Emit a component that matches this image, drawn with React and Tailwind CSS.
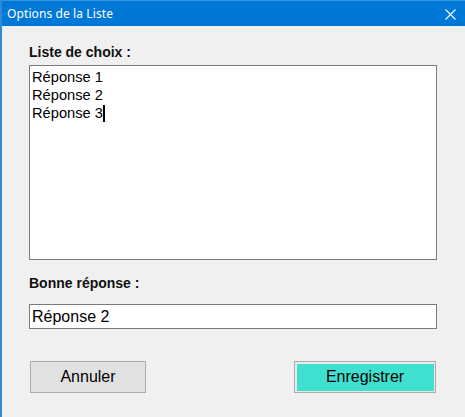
export default function App() {
  const sans = { fontFamily: '"Liberation Sans", Arial, sans-serif' };
  return (
    <div
      className="w-[465px] h-[417px] bg-[#f0f0f0] border-l-2 border-[#2f88d8] flex flex-col overflow-hidden"
      style={sans}
    >
      <div className="h-[26px] bg-[#0078d7] border-t border-[#3a95e0] flex items-center justify-between pl-[5px] pr-[9px] shrink-0">
        <span
          className="text-white text-[12px] leading-none tracking-[0.1px]"
          style={{ fontFamily: '"Noto Sans", "Open Sans", sans-serif' }}
        >
          Options de la Liste
        </span>
        <svg width="11" height="11" viewBox="0 0 11 11" className="mt-[1px]">
          <path d="M0.5 0.5 L10.5 10.5 M10.5 0.5 L0.5 10.5" stroke="#fff" strokeWidth="1.1" fill="none" />
        </svg>
      </div>

      <div className="pl-[27px] w-[435px] flex flex-col">
        <div className="mt-[18px] text-[14px] leading-[16px] font-bold text-[#111]">Liste de choix :</div>
        <div className="mt-[5px] h-[195px] bg-white border border-[#7a7a7a] pl-[2px] pt-[2px] text-[14.67px] leading-[18px] text-black">
          <div>Réponse 1</div>
          <div>Réponse 2</div>
          <div className="flex items-center">
            <span>Réponse 3</span>
            <span className="inline-block w-[2px] h-[17px] bg-black" />
          </div>
        </div>

        <div className="mt-[15px] text-[14px] leading-[16px] font-bold text-[#111]">Bonne réponse :</div>
        <div className="mt-[13px] h-[25px] bg-white border border-[#7a7a7a] pl-[2px] text-[16px] leading-[23px] text-black">
          Réponse 2
        </div>

        <div className="mt-[32px] flex justify-between px-[1px]">
          <div className="w-[116px] h-[32px] bg-[#e1e1e1] border border-[#adadad] flex items-center justify-center text-[16px] text-black">
            Annuler
          </div>
          <div className="w-[142px] h-[32px] border border-[#adadad] bg-[#e8e8e8] p-[1.5px]">
            <div className="w-full h-full bg-[#40e0d0] flex items-center justify-center text-[16px] text-black">
              Enregistrer
            </div>
          </div>
        </div>
      </div>
    </div>
  );
}
